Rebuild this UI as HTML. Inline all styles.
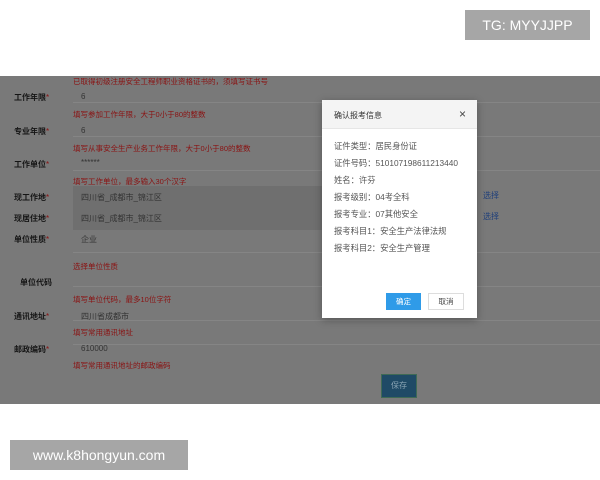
<!DOCTYPE html>
<html><head><meta charset="utf-8"><style>
*{margin:0;padding:0;box-sizing:border-box}
body{width:600px;height:480px;background:#fff;position:relative;overflow:hidden;font-family:"Liberation Sans","Noto Sans CJK SC",sans-serif}
.a{position:absolute}
#ov{left:0;top:76px;width:600px;height:328px;background:#797979}
.lab{position:absolute;font-size:8px;color:#151515;left:14px;font-weight:bold}
.lab b{color:#8a1010;font-weight:normal}
.hint{position:absolute;font-size:7.5px;color:#8a1212;left:73px}
.val{position:absolute;font-size:8px;color:#333;left:81px}
.ln{position:absolute;left:73px;right:0;height:1px;background:#858585}
#modal{left:322px;top:100px;width:155px;height:218px;background:#fff;box-shadow:0 2px 8px rgba(0,0,0,.3)}
#mh{height:29px;background:#f4f4f4;border-bottom:1px solid #e6e6e6;font-size:8px;color:#333;padding:10px 0 0 12px;position:relative}
.mr{position:absolute;left:12px;font-size:8.3px;color:#555}
</style></head><body>
<div class="a" style="left:465px;top:10px;width:125px;height:30px;background:#a6a6a6;color:#fff;font-size:14px;line-height:30px;text-align:center">TG: MYYJJPP</div>
<div class="a" id="ov">
<div class="a" style="left:73px;top:110px;width:404px;height:44px;background:#6f6f6f"></div>
<div class="ln" style="top:26px"></div><div class="ln" style="top:60px"></div><div class="ln" style="top:94px"></div>
<div class="ln" style="top:176px"></div><div class="ln" style="top:210px"></div><div class="ln" style="top:244px"></div><div class="ln" style="top:268px"></div>
<div class="hint" style="top:0">已取得初级注册安全工程师职业资格证书的，须填写证书号</div>
<div class="lab" style="top:16px">工作年限<b>*</b></div><div class="val" style="top:16px">6</div>
<div class="hint" style="top:33px">填写参加工作年限，大于0小于80的整数</div>
<div class="lab" style="top:50px">专业年限<b>*</b></div><div class="val" style="top:50px">6</div>
<div class="hint" style="top:67px">填写从事安全生产业务工作年限，大于0小于80的整数</div>
<div class="lab" style="top:83px">工作单位<b>*</b></div><div class="val" style="top:82px">******</div>
<div class="hint" style="top:100px">填写工作单位，最多输入30个汉字</div>
<div class="lab" style="top:116px">现工作地<b>*</b></div><div class="val" style="top:116px">四川省_成都市_锦江区</div>
<div class="lab" style="top:137px">现居住地<b>*</b></div><div class="val" style="top:137px">四川省_成都市_锦江区</div>
<div class="a" style="left:483px;top:114px;font-size:8px;color:#1f3f7a">选择</div>
<div class="a" style="left:483px;top:135px;font-size:8px;color:#1f3f7a">选择</div>
<div class="lab" style="top:158px">单位性质<b>*</b></div><div class="val" style="top:158px">企业</div>
<div class="hint" style="top:185px">选择单位性质</div>
<div class="lab" style="top:201px;left:20px">单位代码</div>
<div class="hint" style="top:218px">填写单位代码，最多10位字符</div>
<div class="lab" style="top:235px">通讯地址<b>*</b></div><div class="val" style="top:235px">四川省成都市</div>
<div class="hint" style="top:251px">填写常用通讯地址</div>
<div class="lab" style="top:268px">邮政编码<b>*</b></div><div class="val" style="top:268px">610000</div>
<div class="hint" style="top:284px">填写常用通讯地址的邮政编码</div>
<div class="a" style="left:381px;top:298px;width:36px;height:24px;background:#1f4a66;border:1px solid #3f6a55;color:#8aa4b4;font-size:8px;line-height:22px;text-align:center">保存</div>
</div>
<div class="a" id="modal">
<div id="mh">确认报考信息<span style="position:absolute;right:11px;top:7px;font-size:12px;color:#444">×</span></div>
<div class="mr" style="top:40px">证件类型：居民身份证</div>
<div class="mr" style="top:57px">证件号码：510107198611213440</div>
<div class="mr" style="top:74px">姓名：许芬</div>
<div class="mr" style="top:91px">报考级别：04考全科</div>
<div class="mr" style="top:108px">报考专业：07其他安全</div>
<div class="mr" style="top:125px">报考科目1：安全生产法律法规</div>
<div class="mr" style="top:142px">报考科目2：安全生产管理</div>
<div class="a" style="left:64px;top:193px;width:35px;height:17px;background:#2f9be8;color:#fff;font-size:7.5px;line-height:17px;text-align:center">确定</div>
<div class="a" style="left:106px;top:193px;width:36px;height:17px;border:1px solid #ddd;color:#444;font-size:7.5px;line-height:15px;text-align:center">取消</div>
</div>
<div class="a" style="left:10px;top:440px;width:178px;height:30px;background:#a6a6a6;color:#fff;font-size:14px;line-height:30px;text-align:center">www.k8hongyun.com</div>
</body></html>
